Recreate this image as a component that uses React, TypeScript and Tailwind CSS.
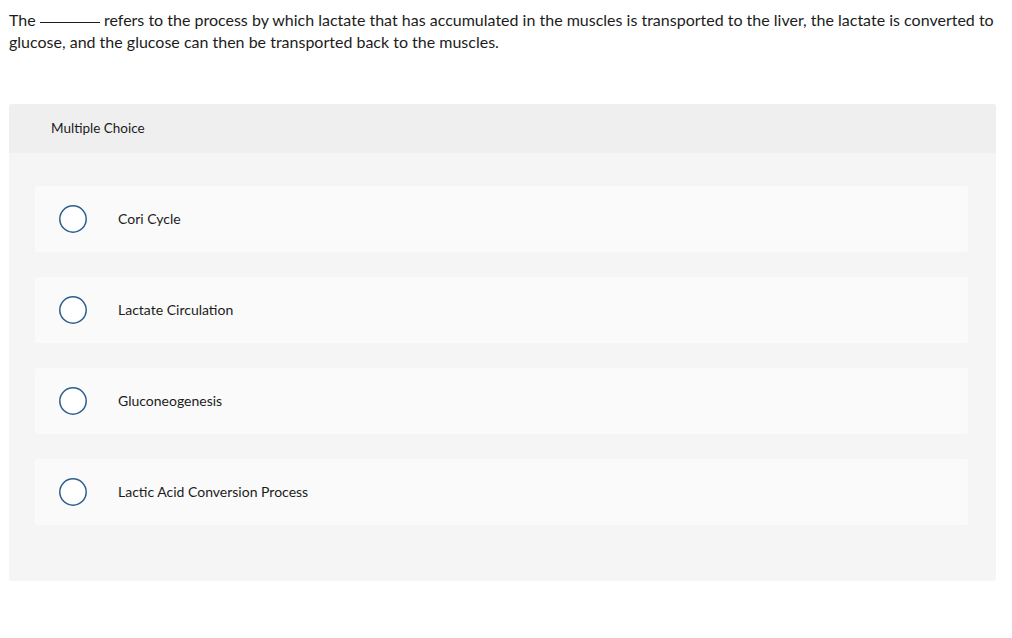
const options = [
  'Cori Cycle',
  'Lactate Circulation',
  'Gluconeogenesis',
  'Lactic Acid Conversion Process',
];

function Radio() {
  return (
    <svg width="30" height="30" viewBox="0 0 30 30" className="shrink-0">
      <circle cx="15" cy="15" r="13.2" fill="#ffffff" stroke="#2b5f8e" strokeWidth="1.5" />
    </svg>
  );
}

export default function App() {
  return (
    <div className="bg-white min-h-screen text-[#1c1c1c]" style={{ fontFamily: 'Lato, "Open Sans", sans-serif' }}>
      <div className="pl-[9px] pr-2 pt-[9px] text-[16px] leading-[22px]">
        <div className="whitespace-nowrap">
          The{' '}
          <span className="inline-block w-[60px] border-b border-[#1c1c1c] translate-y-[-3px]"></span>{' '}
          refers to the process by which lactate that has accumulated in the muscles is transported to the liver, the lactate is converted to
        </div>
        <div className="whitespace-nowrap">glucose, and the glucose can then be transported back to the muscles.</div>
      </div>

      <div className="ml-[9px] w-[987px] mt-[51px] rounded-[3px] bg-[#f5f5f5] overflow-hidden">
        <div className="h-[49px] bg-[#efefef] flex items-center pl-[42px] text-[13.5px]">Multiple Choice</div>
        <div className="pt-[33px] pb-[56px] pl-[26px] pr-[28px] flex flex-col gap-[25px]">
          {options.map((o) => (
            <div key={o} className="h-[66px] bg-[#fafafa] rounded-[3px] flex items-center pl-[23px]">
              <Radio />
              <span className="ml-[30px] text-[14px] -translate-y-px">{o}</span>
            </div>
          ))}
        </div>
      </div>
    </div>
  );
}
